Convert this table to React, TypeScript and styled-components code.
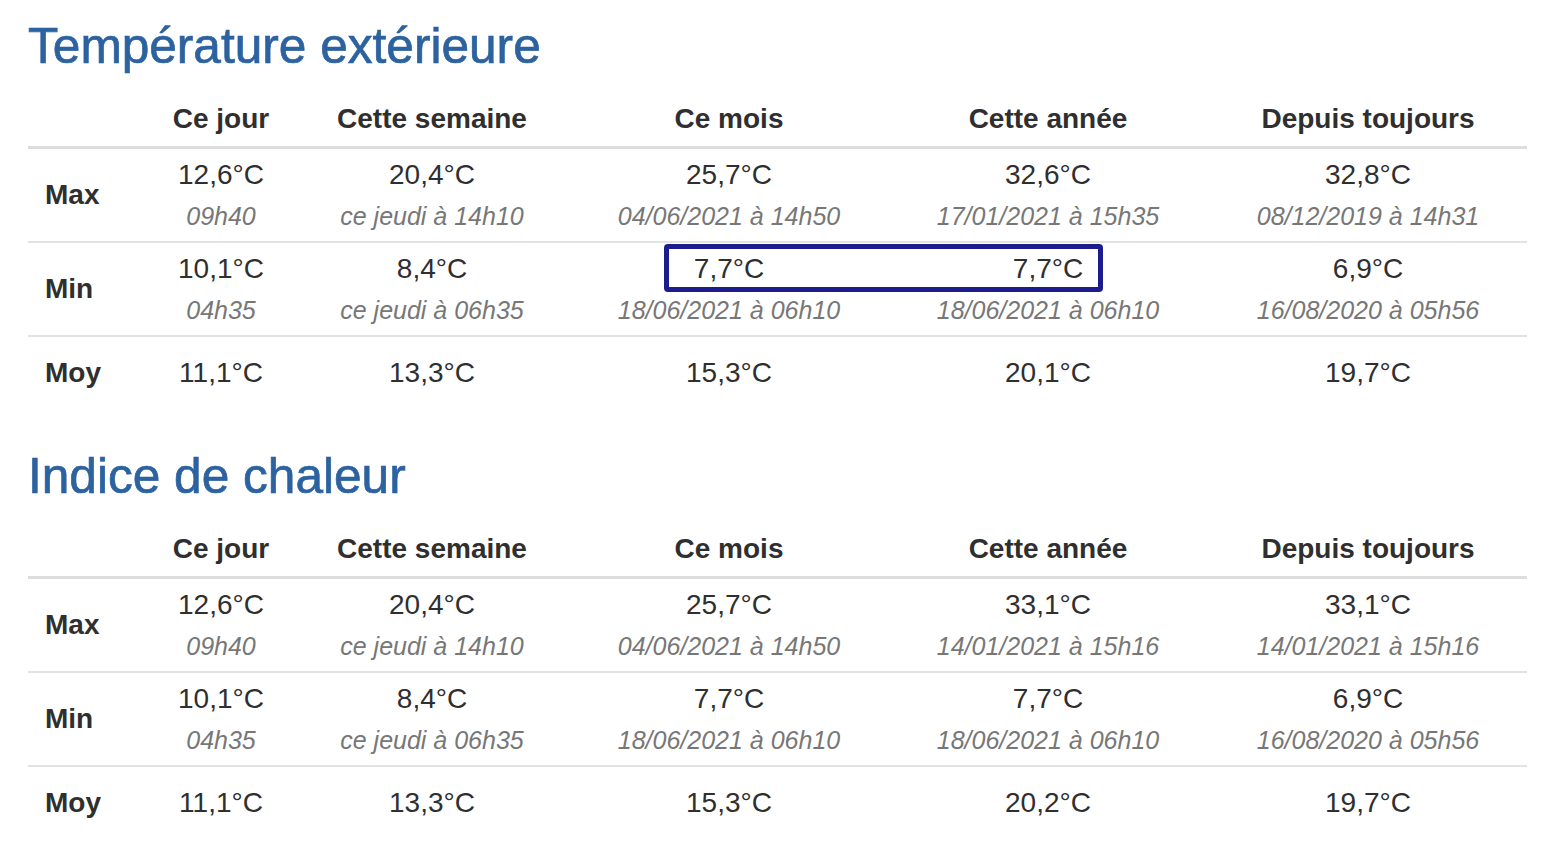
import styled, { createGlobalStyle } from 'styled-components'

type Cell = { value: string; when?: string }
type Row = { label: string; cells: Cell[] }
type Block = { title: string; rows: Row[]; highlight?: boolean }

const columns = ['Ce jour', 'Cette semaine', 'Ce mois', 'Cette année', 'Depuis toujours']
const widths = [121, 144, 278, 316, 322, 318]

const blocks: Block[] = [
  {
    title: 'Température extérieure',
    highlight: true,
    rows: [
      {
        label: 'Max',
        cells: [
          { value: '12,6°C', when: '09h40' },
          { value: '20,4°C', when: 'ce jeudi à 14h10' },
          { value: '25,7°C', when: '04/06/2021 à 14h50' },
          { value: '32,6°C', when: '17/01/2021 à 15h35' },
          { value: '32,8°C', when: '08/12/2019 à 14h31' },
        ],
      },
      {
        label: 'Min',
        cells: [
          { value: '10,1°C', when: '04h35' },
          { value: '8,4°C', when: 'ce jeudi à 06h35' },
          { value: '7,7°C', when: '18/06/2021 à 06h10' },
          { value: '7,7°C', when: '18/06/2021 à 06h10' },
          { value: '6,9°C', when: '16/08/2020 à 05h56' },
        ],
      },
      {
        label: 'Moy',
        cells: [
          { value: '11,1°C' },
          { value: '13,3°C' },
          { value: '15,3°C' },
          { value: '20,1°C' },
          { value: '19,7°C' },
        ],
      },
    ],
  },
  {
    title: 'Indice de chaleur',
    rows: [
      {
        label: 'Max',
        cells: [
          { value: '12,6°C', when: '09h40' },
          { value: '20,4°C', when: 'ce jeudi à 14h10' },
          { value: '25,7°C', when: '04/06/2021 à 14h50' },
          { value: '33,1°C', when: '14/01/2021 à 15h16' },
          { value: '33,1°C', when: '14/01/2021 à 15h16' },
        ],
      },
      {
        label: 'Min',
        cells: [
          { value: '10,1°C', when: '04h35' },
          { value: '8,4°C', when: 'ce jeudi à 06h35' },
          { value: '7,7°C', when: '18/06/2021 à 06h10' },
          { value: '7,7°C', when: '18/06/2021 à 06h10' },
          { value: '6,9°C', when: '16/08/2020 à 05h56' },
        ],
      },
      {
        label: 'Moy',
        cells: [
          { value: '11,1°C' },
          { value: '13,3°C' },
          { value: '15,3°C' },
          { value: '20,2°C' },
          { value: '19,7°C' },
        ],
      },
    ],
  },
]

const GlobalStyle = createGlobalStyle`
  body {
    margin: 0;
    background: #fff;
    color: #333;
    font-family: "Liberation Sans", Arial, sans-serif;
  }
`

const Page = styled.div`
  padding-left: 28px;
  width: 1499px;
`

const Section = styled.section`
  position: relative;
  padding-top: 19px;
`

const Title = styled.h2`
  margin: 0 0 19px;
  font-size: 49.6px;
  line-height: 54px;
  font-weight: 400;
  color: #2c62a0;
  -webkit-text-stroke: 0.7px #2c62a0;
`

const Table = styled.table`
  width: 1499px;
  table-layout: fixed;
  border-collapse: collapse;
`

const HeadCell = styled.th`
  padding: 8px;
  font-size: 28px;
  line-height: 38px;
  font-weight: 700;
  text-align: center;
  color: #2f2f2f;
  border-bottom: 3px solid #ddd;
`

const BodyRow = styled.tr<{ $last?: boolean }>`
  border-bottom: ${(p) => (p.$last ? 'none' : '2px solid #e2e2e2')};

  td {
    padding: ${(p) => (p.$last ? '17px 8px 38px' : '7px 8px 8px')};
  }
`

const Label = styled.td`
  padding-left: 17px !important;
  font-size: 28px;
  line-height: 38px;
  font-weight: 700;
  vertical-align: middle;
  color: #2f2f2f;
`

const ValueCell = styled.td`
  text-align: center;
  vertical-align: top;
`

const Value = styled.div`
  font-size: 28px;
  line-height: 38px;
  color: #2f2f2f;
`

const When = styled.div`
  margin-top: 5px;
  font-size: 25px;
  line-height: 34px;
  font-style: italic;
  color: #777;
`

const Highlight = styled.div`
  position: absolute;
  left: 636px;
  top: 244px;
  width: 439px;
  height: 48px;
  box-sizing: border-box;
  border: 5px solid #1c1c8c;
  border-radius: 4px;
  pointer-events: none;
`

const StatsBlock = ({ block }: { block: Block }) => (
  <Section>
    <Title>{block.title}</Title>
    <Table>
      <colgroup>
        {widths.map((w, i) => (
          <col key={i} style={{ width: w }} />
        ))}
      </colgroup>
      <thead>
        <tr>
          <HeadCell />
          {columns.map((c) => (
            <HeadCell key={c}>{c}</HeadCell>
          ))}
        </tr>
      </thead>
      <tbody>
        {block.rows.map((row, i) => (
          <BodyRow key={row.label} $last={i === block.rows.length - 1}>
            <Label>{row.label}</Label>
            {row.cells.map((cell, j) => (
              <ValueCell key={j}>
                <Value>{cell.value}</Value>
                {cell.when && <When>{cell.when}</When>}
              </ValueCell>
            ))}
          </BodyRow>
        ))}
      </tbody>
    </Table>
    {block.highlight && <Highlight />}
  </Section>
)

export default function App() {
  return (
    <>
      <GlobalStyle />
      <Page>
        {blocks.map((b) => (
          <StatsBlock key={b.title} block={b} />
        ))}
      </Page>
    </>
  )
}
